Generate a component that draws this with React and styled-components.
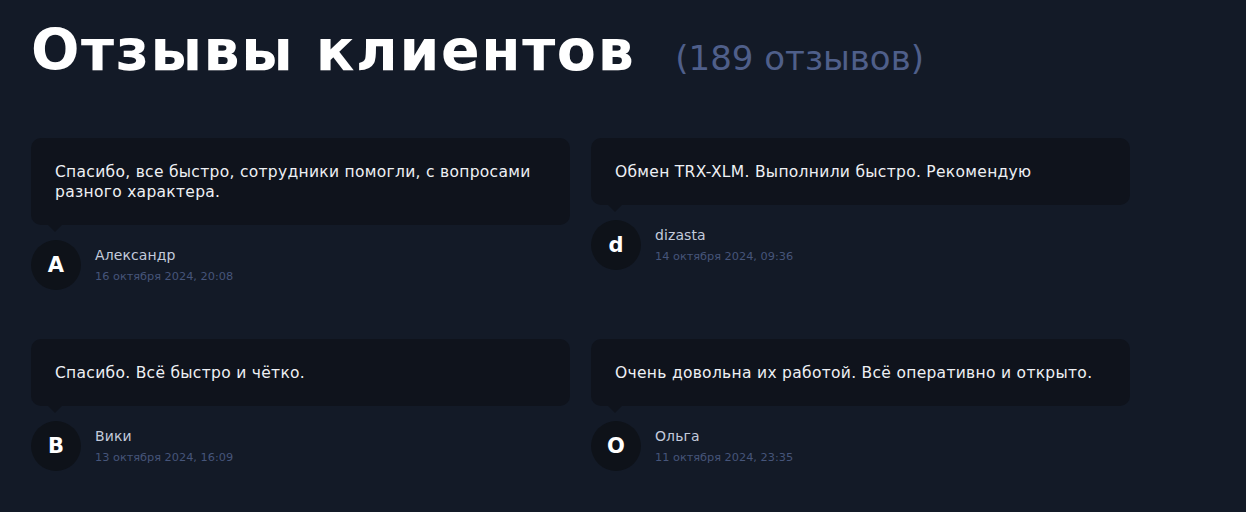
import styled, { createGlobalStyle } from 'styled-components';

const GlobalStyle = createGlobalStyle`
	html, body {
		margin: 0;
		padding: 0;
		background: #131a27;
	}
	body {
		font-family: 'DejaVu Sans', 'Noto Sans', sans-serif;
	}
`;

const Page = styled.div`
	width: 1246px;
	height: 512px;
	box-sizing: border-box;
	padding: 15px 31px 0;
	background: #131a27;
	overflow: hidden;
`;

const Header = styled.div`
	display: flex;
	align-items: baseline;
	gap: 40px;
	margin-bottom: 53px;
`;

const Title = styled.h1`
	margin: 0;
	font-family: 'DejaVu Sans', sans-serif;
	font-weight: 900;
	font-size: 57px;
	letter-spacing: 1.6px;
	line-height: 70px;
	color: #ffffff;
`;

const Count = styled.span`
	font-family: 'DejaVu Sans', sans-serif;
	font-weight: 400;
	font-size: 34px;
	color: #4f5f8a;
`;

const Grid = styled.div`
	display: grid;
	grid-template-columns: 539px 539px;
	column-gap: 21px;
	row-gap: 49px;
	align-items: start;
`;

const Card = styled.div`
	display: flex;
	flex-direction: column;
`;

const Bubble = styled.div`
	position: relative;
	background: #0f131c;
	border-radius: 10px;
	padding: 24px 24px 23px;
	font-size: 15.5px;
	line-height: 20px;
	color: #eef0f4;
	letter-spacing: 0.3px;

	&:after {
		content: '';
		position: absolute;
		left: 17px;
		bottom: -7px;
		border-left: 7px solid transparent;
		border-right: 7px solid transparent;
		border-top: 7px solid #0f131c;
	}
`;

const Author = styled.div`
	display: flex;
	align-items: center;
	gap: 14px;
	margin-top: 15px;
`;

const Avatar = styled.div`
	width: 50px;
	height: 50px;
	border-radius: 50%;
	background: #0e1219;
	color: #ffffff;
	font-weight: 800;
	font-size: 21px;
	display: flex;
	align-items: center;
	justify-content: center;
`;

const Meta = styled.div`
	display: flex;
	flex-direction: column;
	gap: 7px;
`;

const Name = styled.div`
	font-size: 14px;
	color: #c3cbdc;
	letter-spacing: 0.1px;
`;

const Date = styled.div`
	font-size: 11.3px;
	color: #46557a;
`;

const reviews = [
	{
		text: 'Спасибо, все быстро, сотрудники помогли, с вопросами разного характера.',
		name: 'Александр',
		date: '16 октября 2024, 20:08',
		letter: 'A',
	},
	{
		text: 'Обмен TRX-XLM. Выполнили быстро. Рекомендую',
		name: 'dizasta',
		date: '14 октября 2024, 09:36',
		letter: 'd',
	},
	{
		text: 'Спасибо. Всё быстро и чётко.',
		name: 'Вики',
		date: '13 октября 2024, 16:09',
		letter: 'B',
	},
	{
		text: 'Очень довольна их работой. Всё оперативно и открыто.',
		name: 'Ольга',
		date: '11 октября 2024, 23:35',
		letter: 'O',
	},
];

const App = () => {
	return (
		<Page>
			<GlobalStyle />
			<Header>
				<Title>Отзывы клиентов</Title>
				<Count>(189 отзывов)</Count>
			</Header>
			<Grid>
				{reviews.map((r) => (
					<Card key={r.name}>
						<Bubble>{r.text}</Bubble>
						<Author>
							<Avatar>{r.letter}</Avatar>
							<Meta>
								<Name>{r.name}</Name>
								<Date>{r.date}</Date>
							</Meta>
						</Author>
					</Card>
				))}
			</Grid>
		</Page>
	);
};

export default App;
